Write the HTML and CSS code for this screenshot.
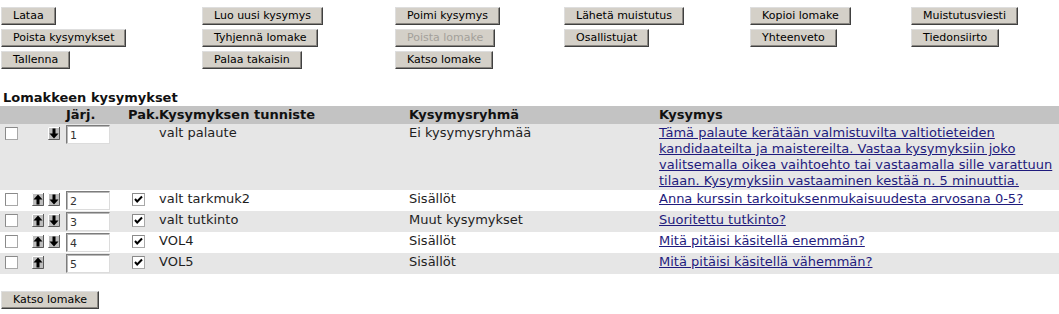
FILE: index.html
```html
<!DOCTYPE html>
<html lang="fi">
<head>
<meta charset="utf-8">
<title>Lomakkeen kysymykset</title>
<link rel="stylesheet" href="styles.css">
</head>
<body>
<div class="toolbar">
  <button class="btn">Lataa</button>
  <button class="btn">Luo uusi kysymys</button>
  <button class="btn">Poimi kysymys</button>
  <button class="btn">Lähetä muistutus</button>
  <button class="btn">Kopioi lomake</button>
  <button class="btn">Muistutusviesti</button>
  <button class="btn">Poista kysymykset</button>
  <button class="btn">Tyhjennä lomake</button>
  <button class="btn" disabled>Poista lomake</button>
  <button class="btn">Osallistujat</button>
  <button class="btn">Yhteenveto</button>
  <button class="btn">Tiedonsiirto</button>
  <button class="btn">Tallenna</button>
  <button class="btn">Palaa takaisin</button>
  <button class="btn">Katso lomake</button>
</div>

<h2 class="title">Lomakkeen kysymykset</h2>

<table class="qtable">
  <colgroup>
    <col class="c-sel"><col class="c-arrows"><col class="c-ord"><col class="c-pak"><col class="c-id"><col class="c-grp"><col class="c-q">
  </colgroup>
  <thead>
    <tr>
      <th></th><th></th><th>Järj.</th><th>Pak.</th><th>Kysymyksen tunniste</th><th>Kysymysryhmä</th><th>Kysymys</th>
    </tr>
  </thead>
  <tbody>
    <tr class="alt">
      <td><span class="cb"><svg width="13" height="13" viewBox="0 0 13 13"><rect x="0.5" y="0.5" width="12" height="12" fill="#fff" stroke="#a8a8a8"/><path d="M0.5 12.5V0.5H12.5" fill="none" stroke="#8a8a8a"/></svg></span></td>
      <td><div class="arrows"><span class="slot"></span><span class="arrow"><svg width="12" height="13" viewBox="0 0 12 13"><rect width="12" height="13" fill="#bdbdbd"/><path d="M0.5 12.5H11.5V0" fill="none" stroke="#5a5a5a"/><path d="M0.5 12V0.5H11" fill="none" stroke="#ffffff"/><path d="M4.5 1.5H7.5V6.5H10.5L6 11.5L1.5 6.5H4.5Z" fill="#000"/></svg></span></div></td>
      <td><input class="ord" type="text" value="1"></td>
      <td></td>
      <td>valt palaute</td>
      <td>Ei kysymysryhmää</td>
      <td><a href="#" class="qlink">Tämä palaute kerätään valmistuvilta valtiotieteiden kandidaateilta ja maistereilta. Vastaa kysymyksiin joko valitsemalla oikea vaihtoehto tai vastaamalla sille varattuun tilaan. Kysymyksiin vastaaminen kestää n. 5 minuuttia.</a></td>
    </tr>
    <tr>
      <td><span class="cb"><svg width="13" height="13" viewBox="0 0 13 13"><rect x="0.5" y="0.5" width="12" height="12" fill="#fff" stroke="#a8a8a8"/><path d="M0.5 12.5V0.5H12.5" fill="none" stroke="#8a8a8a"/></svg></span></td>
      <td><div class="arrows"><span class="arrow"><svg width="12" height="13" viewBox="0 0 12 13"><rect width="12" height="13" fill="#bdbdbd"/><path d="M0.5 12.5H11.5V0" fill="none" stroke="#5a5a5a"/><path d="M0.5 12V0.5H11" fill="none" stroke="#ffffff"/><path d="M6 1.5L10.5 6.5H7.5V11.5H4.5V6.5H1.5Z" fill="#000"/></svg></span><span class="arrow"><svg width="12" height="13" viewBox="0 0 12 13"><rect width="12" height="13" fill="#bdbdbd"/><path d="M0.5 12.5H11.5V0" fill="none" stroke="#5a5a5a"/><path d="M0.5 12V0.5H11" fill="none" stroke="#ffffff"/><path d="M4.5 1.5H7.5V6.5H10.5L6 11.5L1.5 6.5H4.5Z" fill="#000"/></svg></span></div></td>
      <td><input class="ord" type="text" value="2"></td>
      <td><span class="cb"><svg width="13" height="13" viewBox="0 0 13 13"><rect x="0.5" y="0.5" width="12" height="12" fill="#fff" stroke="#a8a8a8"/><path d="M0.5 12.5V0.5H12.5" fill="none" stroke="#8a8a8a"/><path d="M3 6L5.2 8.5L10 3.5" fill="none" stroke="#000" stroke-width="2"/></svg></span></td>
      <td>valt tarkmuk2</td>
      <td>Sisällöt</td>
      <td><a href="#" class="qlink">Anna kurssin tarkoituksenmukaisuudesta arvosana 0-5?</a></td>
    </tr>
    <tr class="alt">
      <td><span class="cb"><svg width="13" height="13" viewBox="0 0 13 13"><rect x="0.5" y="0.5" width="12" height="12" fill="#fff" stroke="#a8a8a8"/><path d="M0.5 12.5V0.5H12.5" fill="none" stroke="#8a8a8a"/></svg></span></td>
      <td><div class="arrows"><span class="arrow"><svg width="12" height="13" viewBox="0 0 12 13"><rect width="12" height="13" fill="#bdbdbd"/><path d="M0.5 12.5H11.5V0" fill="none" stroke="#5a5a5a"/><path d="M0.5 12V0.5H11" fill="none" stroke="#ffffff"/><path d="M6 1.5L10.5 6.5H7.5V11.5H4.5V6.5H1.5Z" fill="#000"/></svg></span><span class="arrow"><svg width="12" height="13" viewBox="0 0 12 13"><rect width="12" height="13" fill="#bdbdbd"/><path d="M0.5 12.5H11.5V0" fill="none" stroke="#5a5a5a"/><path d="M0.5 12V0.5H11" fill="none" stroke="#ffffff"/><path d="M4.5 1.5H7.5V6.5H10.5L6 11.5L1.5 6.5H4.5Z" fill="#000"/></svg></span></div></td>
      <td><input class="ord" type="text" value="3"></td>
      <td><span class="cb"><svg width="13" height="13" viewBox="0 0 13 13"><rect x="0.5" y="0.5" width="12" height="12" fill="#fff" stroke="#a8a8a8"/><path d="M0.5 12.5V0.5H12.5" fill="none" stroke="#8a8a8a"/><path d="M3 6L5.2 8.5L10 3.5" fill="none" stroke="#000" stroke-width="2"/></svg></span></td>
      <td>valt tutkinto</td>
      <td>Muut kysymykset</td>
      <td><a href="#" class="qlink">Suoritettu tutkinto?</a></td>
    </tr>
    <tr>
      <td><span class="cb"><svg width="13" height="13" viewBox="0 0 13 13"><rect x="0.5" y="0.5" width="12" height="12" fill="#fff" stroke="#a8a8a8"/><path d="M0.5 12.5V0.5H12.5" fill="none" stroke="#8a8a8a"/></svg></span></td>
      <td><div class="arrows"><span class="arrow"><svg width="12" height="13" viewBox="0 0 12 13"><rect width="12" height="13" fill="#bdbdbd"/><path d="M0.5 12.5H11.5V0" fill="none" stroke="#5a5a5a"/><path d="M0.5 12V0.5H11" fill="none" stroke="#ffffff"/><path d="M6 1.5L10.5 6.5H7.5V11.5H4.5V6.5H1.5Z" fill="#000"/></svg></span><span class="arrow"><svg width="12" height="13" viewBox="0 0 12 13"><rect width="12" height="13" fill="#bdbdbd"/><path d="M0.5 12.5H11.5V0" fill="none" stroke="#5a5a5a"/><path d="M0.5 12V0.5H11" fill="none" stroke="#ffffff"/><path d="M4.5 1.5H7.5V6.5H10.5L6 11.5L1.5 6.5H4.5Z" fill="#000"/></svg></span></div></td>
      <td><input class="ord" type="text" value="4"></td>
      <td><span class="cb"><svg width="13" height="13" viewBox="0 0 13 13"><rect x="0.5" y="0.5" width="12" height="12" fill="#fff" stroke="#a8a8a8"/><path d="M0.5 12.5V0.5H12.5" fill="none" stroke="#8a8a8a"/><path d="M3 6L5.2 8.5L10 3.5" fill="none" stroke="#000" stroke-width="2"/></svg></span></td>
      <td>VOL4</td>
      <td>Sisällöt</td>
      <td><a href="#" class="qlink">Mitä pitäisi käsitellä enemmän?</a></td>
    </tr>
    <tr class="alt">
      <td><span class="cb"><svg width="13" height="13" viewBox="0 0 13 13"><rect x="0.5" y="0.5" width="12" height="12" fill="#fff" stroke="#a8a8a8"/><path d="M0.5 12.5V0.5H12.5" fill="none" stroke="#8a8a8a"/></svg></span></td>
      <td><div class="arrows"><span class="arrow"><svg width="12" height="13" viewBox="0 0 12 13"><rect width="12" height="13" fill="#bdbdbd"/><path d="M0.5 12.5H11.5V0" fill="none" stroke="#5a5a5a"/><path d="M0.5 12V0.5H11" fill="none" stroke="#ffffff"/><path d="M6 1.5L10.5 6.5H7.5V11.5H4.5V6.5H1.5Z" fill="#000"/></svg></span><span class="slot"></span></div></td>
      <td><input class="ord" type="text" value="5"></td>
      <td><span class="cb"><svg width="13" height="13" viewBox="0 0 13 13"><rect x="0.5" y="0.5" width="12" height="12" fill="#fff" stroke="#a8a8a8"/><path d="M0.5 12.5V0.5H12.5" fill="none" stroke="#8a8a8a"/><path d="M3 6L5.2 8.5L10 3.5" fill="none" stroke="#000" stroke-width="2"/></svg></span></td>
      <td>VOL5</td>
      <td>Sisällöt</td>
      <td><a href="#" class="qlink">Mitä pitäisi käsitellä vähemmän?</a></td>
    </tr>
  </tbody>
</table>

<div class="footer">
  <button class="btn">Katso lomake</button>
</div>
</body>
</html>
```

FILE: styles.css
```css
html, body {
  margin: 0;
  padding: 0;
  background: #ffffff;
}

body {
  font-family: "DejaVu Sans", Verdana, sans-serif;
  font-size: 13px;
  line-height: 16px;
  color: #1e1e1e;
  width: 1059px;
}

.toolbar {
  display: grid;
  grid-template-columns: 201px 193px 169px 186px 161px 1fr;
  row-gap: 4px;
  justify-items: start;
  padding: 7px 0 0 1px;
}

.btn {
  font-family: "DejaVu Sans", Verdana, sans-serif;
  font-size: 11px;
  line-height: 14px;
  height: 18px;
  margin: 0;
  padding: 0 11px;
  color: #000;
  background: #d4d0c8;
  border: 1px solid;
  border-color: #dedede #404040 #404040 #dedede;
  box-shadow: inset -1px -1px 0 #8a8782;
  border-radius: 0;
  white-space: nowrap;
}

.btn:disabled {
  color: #a3a09a;
}

.title {
  margin: 21px 0 0 0;
  padding-left: 3px;
  font-size: 13px;
  line-height: 16px;
  font-weight: bold;
  color: #111;
}

.qtable {
  width: 1059px;
  table-layout: fixed;
  border-collapse: collapse;
  border-spacing: 0;
}

.c-sel { width: 24px; }
.c-arrows { width: 41px; }
.c-ord { width: 62px; }
.c-pak { width: 31px; }
.c-id { width: 250px; }
.c-grp { width: 250px; }
.c-q { width: 401px; }

.qtable th,
.qtable td {
  padding: 1px;
  text-align: left;
  vertical-align: top;
  font-size: 13px;
  line-height: 16px;
}

.qtable thead tr {
  background: #c3c3c3;
}

.qtable th {
  font-weight: bold;
  color: #111;
  white-space: nowrap;
  overflow: visible;
}

.qtable tbody tr {
  background: #ffffff;
}

.qtable tbody tr.alt {
  background: #e6e6e6;
}

.cb {
  display: block;
  width: 13px;
  height: 13px;
  margin: 2px 0 0 4px;
}

.cb svg,
.arrow svg {
  display: block;
}

.arrows {
  display: flex;
  gap: 4px;
  padding: 2px 0 0 7px;
}

.slot,
.arrow {
  display: block;
  width: 12px;
  height: 13px;
}

.ord {
  display: block;
  box-sizing: border-box;
  width: 44px;
  height: 19px;
  margin: 0;
  padding: 1px 2px 0 3px;
  font-family: "DejaVu Sans", Verdana, sans-serif;
  font-size: 11px;
  color: #333;
  background: #fff;
  border: 1px solid;
  border-color: #7c7c7c #dcdcdc #dcdcdc #7c7c7c;
  box-shadow: inset 1px 1px 0 #b8b8b8;
  outline: none;
}

.qlink {
  color: #1f1b7d;
  text-decoration: underline;
}

.footer {
  margin-top: 17px;
  padding-left: 1px;
}
```
